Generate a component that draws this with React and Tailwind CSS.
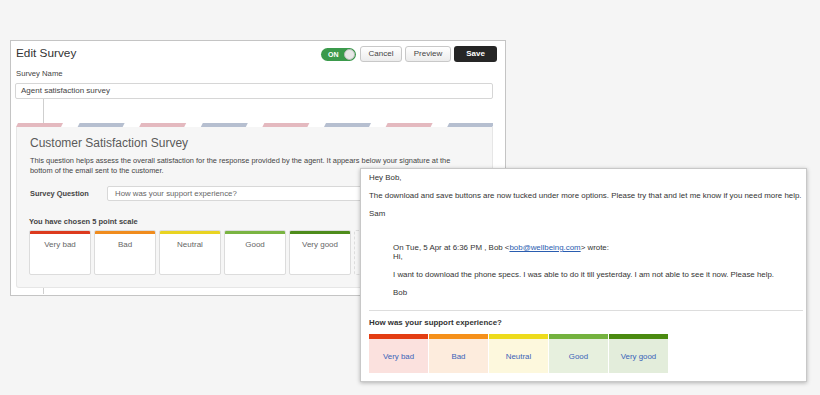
import React from "react";

const leftScale = [
  { label: "Very bad", bar: "bg-[#dc3a1e]" },
  { label: "Bad", bar: "bg-[#f08c1e]" },
  { label: "Neutral", bar: "bg-[#e9d422]" },
  { label: "Good", bar: "bg-[#7ab442]" },
  { label: "Very good", bar: "bg-[#4e8c1c]" },
];

const mailScale = [
  { label: "Very bad", bar: "bg-[#e33d12]", bg: "bg-[#fbe1de]" },
  { label: "Bad", bar: "bg-[#f5901a]", bg: "bg-[#fdecdd]" },
  { label: "Neutral", bar: "bg-[#eddb1c]", bg: "bg-[#fdf8dd]" },
  { label: "Good", bar: "bg-[#74b23e]", bg: "bg-[#e7f0de]" },
  { label: "Very good", bar: "bg-[#4a8a10]", bg: "bg-[#e3eddb]" },
];

function Stripe() {
  const segs = [];
  for (let i = 0; i < 8; i++) {
    const x = i * 61.6;
    segs.push(
      <polygon
        key={i}
        points={`${x},4 ${x + 2},0 ${x + 47},0 ${x + 45},4`}
        fill={i % 2 === 0 ? "#e4b9bf" : "#b6bfd0"}
      />
    );
  }
  return (
    <svg width="477" height="4" className="block">
      {segs}
    </svg>
  );
}

export default function App() {
  return (
    <div className="relative w-[820px] h-[395px] overflow-hidden bg-[#f5f5f5] font-['Liberation_Sans',Arial,sans-serif] text-[#555]">
      <div className="pt-[40px] pl-[10px]">
        <div className="w-[496px] h-[256px] border border-[#c4c4c4] bg-white">
          {/* header */}
          <div className="flex items-center justify-between h-[26px] pl-[5px] pr-[8px]">
            <div className="text-[11.8px] text-[#333]">Edit Survey</div>
            <div className="flex items-center gap-[3px]">
              <div className="flex items-center justify-between w-[35px] h-[13px] rounded-full bg-[#3b9a4c] pl-[7px] pr-[1px] mr-[1px]">
                <span className="text-[7px] font-bold text-white leading-none">ON</span>
                <span className="w-[11px] h-[11px] rounded-full bg-[#e8e8e8] border border-[#bbb]"></span>
              </div>
              <div className="w-[42px] h-[16px] flex items-center justify-center rounded-[3px] border border-[#c8c8c8] bg-gradient-to-b from-white to-[#ececec] text-[8px] text-[#444]">
                Cancel
              </div>
              <div className="w-[46px] h-[16px] flex items-center justify-center rounded-[3px] border border-[#c8c8c8] bg-gradient-to-b from-white to-[#ececec] text-[8px] text-[#444]">
                Preview
              </div>
              <div className="w-[43px] h-[16px] flex items-center justify-center rounded-[3px] bg-[#262626] text-[8px] font-bold text-white">
                Save
              </div>
            </div>
          </div>
          <div className="pl-[5px] h-[14px] leading-[14px] text-[7.7px] text-[#444]">Survey Name</div>
          <div className="ml-[4px] mt-[2px] w-[478px] h-[16px] border border-[#d6d6d6] rounded-[2px] flex items-center pl-[5px] text-[8px] text-[#444]">
            Agent satisfaction survey
          </div>
          <div className="ml-[32px] h-[24px] border-l border-[#cfcfcf]"></div>
          {/* card */}
          <div className="ml-[5px] w-[477px]">
            <Stripe />
            <div className="h-[161px] bg-[#f6f6f6] border-l border-b border-r border-[#e6e6e6] rounded-b-[3px] pl-[12px] pt-[6px]">
              <div className="h-[20px] leading-[20px] pl-[1px] text-[12px] text-[#5a5a5a]">Customer Satisfaction Survey</div>
              <div className="mt-[3px] pl-[1px] text-[7.4px] leading-[10px] text-[#444] w-[460px]">
                This question helps assess the overall satisfaction for the response provided by the agent. It appears below your signature at the
                <br />
                bottom of the email sent to the customer.
              </div>
              <div className="mt-[10px] flex items-center h-[15px] pl-[1px]">
                <div className="w-[77px] text-[7.4px] font-bold text-[#444]">Survey Question</div>
                <div className="flex-1 h-[15px] bg-white border border-[#d8d8d8] rounded-[2px] flex items-center pl-[7px] text-[7.8px] text-[#666]">
                  How was your support experience?
                </div>
              </div>
              <div className="mt-[15px] h-[12px] leading-[12px] text-[7.5px] font-bold text-[#444]">You have chosen 5 point scale</div>
              <div className="mt-[2px] flex gap-[3px]">
                {leftScale.map((s) => (
                  <div key={s.label} className="w-[62px] h-[45px] bg-white border border-[#dcdcdc] rounded-[2px] overflow-hidden">
                    <div className={`h-[3px] ${s.bar}`}></div>
                    <div className="pt-[5px] text-center text-[8px] text-[#666]">{s.label}</div>
                  </div>
                ))}
                <div className="w-[62px] h-[45px] border border-dashed border-[#ddd] rounded-[2px]"></div>
              </div>
            </div>
          </div>
          <div className="ml-[32px] h-[6px] border-l border-[#cfcfcf]"></div>
        </div>
      </div>

      {/* email overlay */}
      <div className="absolute left-[360px] top-[168px] w-[447px] h-[214px] bg-white border border-[#c8c8c8] shadow-[0_1px_4px_rgba(0,0,0,0.28)] pl-[8px] pr-[2px] pt-[3px] text-[7.9px] text-[#333] whitespace-nowrap">
        <div className="leading-[12px]">Hey Bob,</div>
        <div className="mt-[6px] leading-[12px]">
          The download and save buttons are now tucked under more options. Please try that and let me know if you need more help.
        </div>
        <div className="mt-[6px] leading-[12px]">Sam</div>
        <div className="mt-[23px] pl-[24px] leading-[9px]">
          <div>
            On Tue, 5 Apr at 6:36 PM , Bob &lt;<span className="text-[#2a5db0] underline">bob@wellbeing.com</span>&gt; wrote:
          </div>
          <div>Hi,</div>
          <div className="mt-[9px]">I want to download the phone specs. I was able to do it till yesterday. I am not able to see it now. Please help.</div>
          <div className="mt-[9px]">Bob</div>
        </div>
        <div className="mt-[13px] mr-[1px] border-t border-[#ddd]"></div>
        <div className="mt-[7px] leading-[10px] font-bold text-[#333]">How was your support experience?</div>
        <div className="mt-[6px] flex gap-[1px]">
          {mailScale.map((s) => (
            <div key={s.label} className={`w-[59px] h-[39px] ${s.bg}`}>
              <div className={`h-[5px] ${s.bar}`}></div>
              <div className="pt-[13px] text-center leading-[10px] text-[#3a63b8]">{s.label}</div>
            </div>
          ))}
        </div>
      </div>
    </div>
  );
}
